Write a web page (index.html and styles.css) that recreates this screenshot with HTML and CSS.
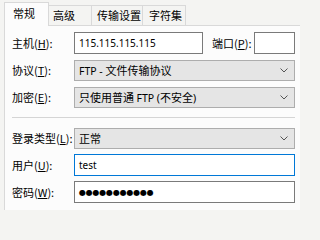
FILE: index.html
```html
<!DOCTYPE html>
<html>
<head>
<meta charset="utf-8">
<link rel="stylesheet" href="styles.css">
</head>
<body>
<div class="dialog">
  <div class="tabs">
    <div class="tab active t1">常规</div>
    <div class="tab t2">高级</div>
    <div class="tab t3">传输设置</div>
    <div class="tab t4">字符集</div>
  </div>
  <div class="panel">
    <div class="row">
      <span class="lbl">主机(<u>H</u>):</span>
      <div class="field input host"><span class="latin">115.115.115.115</span></div>
      <span class="lbl port-lbl">端口(<u>P</u>):</span>
      <div class="field input port"></div>
    </div>
    <div class="row">
      <span class="lbl">协议(<u>T</u>):</span>
      <div class="field combo"><span><span class="latin">FTP - </span>文件传输协议</span>
        <svg class="chev" width="8" height="5" viewBox="0 0 8 5"><polyline points="0.5,0.5 4,4 7.5,0.5" fill="none" stroke="#555" stroke-width="1"/></svg>
      </div>
    </div>
    <div class="row">
      <span class="lbl">加密(<u>E</u>):</span>
      <div class="field combo"><span>只使用普通 <span class="latin">FTP (</span>不安全<span class="latin">)</span></span>
        <svg class="chev" width="8" height="5" viewBox="0 0 8 5"><polyline points="0.5,0.5 4,4 7.5,0.5" fill="none" stroke="#555" stroke-width="1"/></svg>
      </div>
    </div>
    <div class="sep"></div>
    <div class="row">
      <span class="lbl">登录类型(<u>L</u>):</span>
      <div class="field combo"><span>正常</span>
        <svg class="chev" width="8" height="5" viewBox="0 0 8 5"><polyline points="0.5,0.5 4,4 7.5,0.5" fill="none" stroke="#555" stroke-width="1"/></svg>
      </div>
    </div>
    <div class="row">
      <span class="lbl">用户(<u>U</u>):</span>
      <div class="field input focus"><span class="latin">test</span></div>
    </div>
    <div class="row">
      <span class="lbl">密码(<u>W</u>):</span>
      <div class="field input"><span class="dots">●●●●●●●●●●●</span></div>
    </div>
  </div>
</div>
</body>
</html>
```
FILE: styles.css
```css
html, body {
  margin: 0;
  padding: 0;
  background: #f4f4f2;
}
body {
  width: 300px;
  height: 210px;
  overflow: hidden;
  font-family: "Noto Sans CJK SC", "Noto Sans", sans-serif;
  font-size: 11px;
  color: #000;
}
.dialog {
  display: flex;
  flex-direction: column;
  height: 210px;
}
.tabs {
  display: flex;
  align-items: flex-end;
  height: 25px;
  padding-left: 4px;
  position: relative;
  z-index: 1;
}
.tab {
  box-sizing: border-box;
  height: 20px;
  border: 1px solid #d9d9d9;
  border-left: none;
  border-bottom: none;
  display: flex;
  align-items: center;
  line-height: 1;
  background: #f4f4f2;
}
.tab.active {
  height: 24px;
  margin-bottom: -1px;
  background: #fcfcfc;
  border-left: 1px solid #d9d9d9;
}
.t1 { width: 45px; padding-left: 8px; padding-bottom: 3px; }
.t2 { width: 43px; padding-left: 4px; }
.t3 { width: 51px; padding-left: 5px; }
.t4 { width: 43px; padding-left: 6px; }
.panel {
  flex: 1;
  margin-left: 4px;
  background: #fcfcfc;
  border-left: 1px solid #d9d9d9;
  border-top: 1px solid #d9d9d9;
  padding: 6px 5px 0 7px;
  display: flex;
  flex-direction: column;
  gap: 5px;
}
.row {
  display: flex;
  align-items: center;
  height: 22px;
}
.lbl {
  width: 62px;
  flex: none;
  white-space: nowrap;
}
.lbl u {
  text-decoration: underline;
  text-underline-offset: 1px;
}
.port-lbl {
  width: auto;
  margin-left: 9px;
  margin-right: 3px;
}
.field {
  box-sizing: border-box;
  height: 22px;
  display: flex;
  align-items: center;
  padding-left: 4px;
  white-space: nowrap;
}
.input {
  flex: 1;
  border: 1px solid #7a7a7a;
  background: #fff;
}
.input .latin {
  font-size: 10px;
}
.input.host {
  flex: none;
  width: 129px;
}
.input.port {
  flex: none;
  width: 41px;
}
.input.focus {
  border-color: #0078d7;
}
.combo {
  flex: 1;
  height: 21px;
  border: 1px solid #adadad;
  background: #e5e5e5;
  justify-content: space-between;
  padding-right: 6px;
}
.chev {
  flex: none;
}
.latin {
  font-family: "Noto Sans", sans-serif;
  font-size: 10.5px;
}
.dots {
  font-family: "DejaVu Sans", sans-serif;
  font-size: 8px;
  letter-spacing: -0.2px;
}
.sep {
  height: 1px;
  background: #d5d5d5;
  margin: 4px 0 4px 0;
}
```
